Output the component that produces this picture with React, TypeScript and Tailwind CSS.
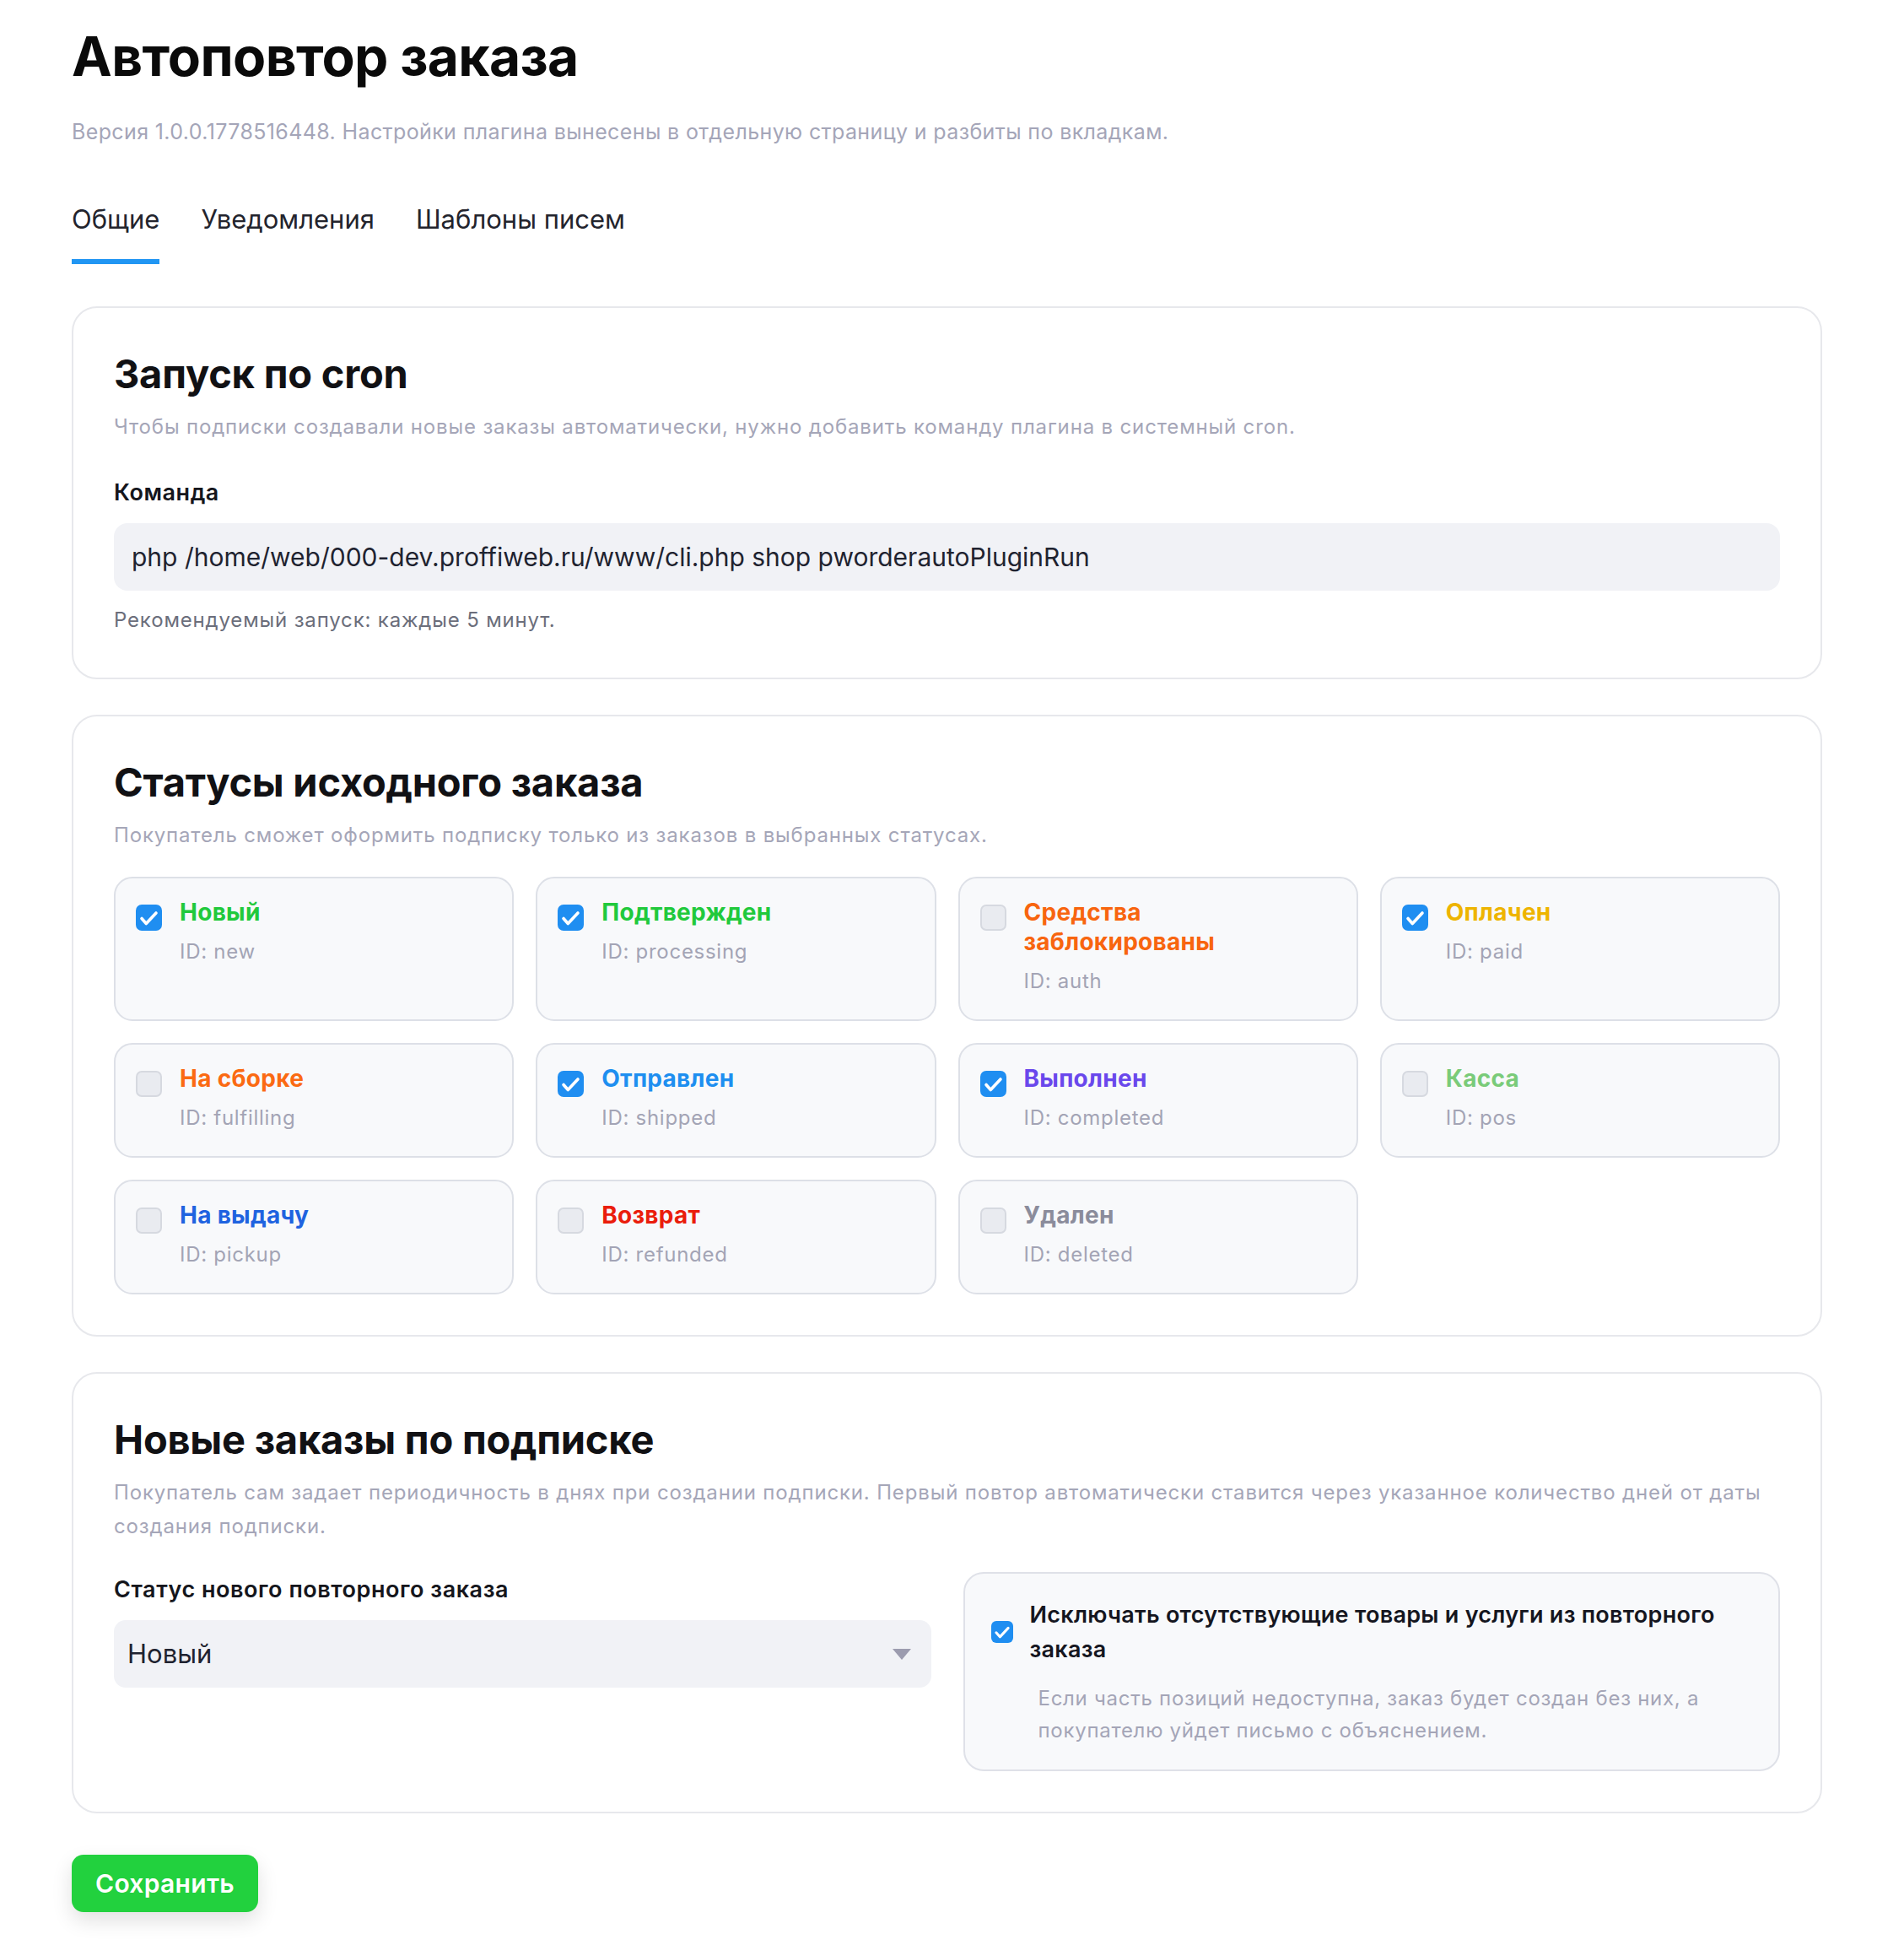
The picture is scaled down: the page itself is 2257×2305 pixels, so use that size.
import React from 'react';

type Status = {
  name: string;
  id: string;
  color: string;
  checked: boolean;
};

const statuses: Status[] = [
  { name: 'Новый', id: 'new', color: 'text-[#21c93c]', checked: true },
  { name: 'Подтвержден', id: 'processing', color: 'text-[#21c93c]', checked: true },
  { name: 'Средства заблокированы', id: 'auth', color: 'text-[#f8650f]', checked: false },
  { name: 'Оплачен', id: 'paid', color: 'text-[#eeb400]', checked: true },
  { name: 'На сборке', id: 'fulfilling', color: 'text-[#fb6a12]', checked: false },
  { name: 'Отправлен', id: 'shipped', color: 'text-[#1e8ff0]', checked: true },
  { name: 'Выполнен', id: 'completed', color: 'text-[#6a48ec]', checked: true },
  { name: 'Касса', id: 'pos', color: 'text-[#7acb79]', checked: false },
  { name: 'На выдачу', id: 'pickup', color: 'text-[#1f63e0]', checked: false },
  { name: 'Возврат', id: 'refunded', color: 'text-[#ea1d0c]', checked: false },
  { name: 'Удален', id: 'deleted', color: 'text-[#8b8c9b]', checked: false },
];

function CheckBox({ checked, small }: { checked: boolean; small?: boolean }) {
  const size = small ? 'w-[26px] h-[26px] rounded-[6px]' : 'w-[31px] h-[31px] rounded-[7px]';
  if (!checked) {
    return <span className={`${size} shrink-0 block bg-[#e9ebf0] border-2 border-[#d6d9e0]`} />;
  }
  return (
    <span className={`${size} shrink-0 flex items-center justify-center bg-[#1f8ef1]`}>
      <svg viewBox="0 0 31 31" className="w-full h-full">
        <path
          d="M7 16.5l5.3 6L24 10"
          fill="none"
          stroke="#ffffff"
          strokeWidth="3.6"
          strokeLinecap="round"
          strokeLinejoin="round"
        />
      </svg>
    </span>
  );
}

function Card({ title, desc, children }: { title: string; desc: string; children: React.ReactNode }) {
  return (
    <section className="rounded-[30px] border-2 border-[#e7e8ec] bg-white px-[48px] pt-[53px] pb-[48px]">
      <h2 className="text-[47px] leading-[50px] font-bold text-[#111114] tracking-[-0.005em]">{title}</h2>
      <p className="mt-[18px] text-[24px] leading-[40px] tracking-[0.035em] text-[#a5a6b8]">{desc}</p>
      {children}
    </section>
  );
}

export default function App() {
  const tabs = ['Общие', 'Уведомления', 'Шаблоны писем'];

  return (
    <div className="min-h-screen bg-white font-['Inter','Noto_Sans',sans-serif] text-[#1f2330]">
      <div className="ml-[85px] w-[2075px] pt-[28px] pb-[40px]">
        {/* Header */}
        <h1 className="text-[64px] leading-[77px] font-bold text-[#0a0a0a] tracking-[-0.01em]">
          Автоповтор заказа
        </h1>
        <p className="mt-[33px] text-[25px] leading-[36px] tracking-[0.015em] text-[#a4a5b8]">
          Версия 1.0.0.1778516448. Настройки плагина вынесены в отдельную страницу и разбиты по вкладкам.
        </p>

        {/* Tabs */}
        <nav className="mt-[66px] flex gap-[49px]">
          {tabs.map((tab, i) => (
            <div
              key={tab}
              className={`pb-[27px] border-b-[6px] text-[31px] leading-[40px] text-[#23242d] ${
                i === 0 ? 'border-[#2196f3]' : 'border-transparent'
              }`}
            >
              {tab}
            </div>
          ))}
        </nav>

        <div className="mt-[50px] flex flex-col gap-[42px]">
          {/* Cron */}
          <Card
            title="Запуск по cron"
            desc="Чтобы подписки создавали новые заказы автоматически, нужно добавить команду плагина в системный cron."
          >
            <div className="mt-[40px] text-[27px] leading-[36px] tracking-[0.02em] font-semibold text-[#15161c]">
              Команда
            </div>
            <div className="mt-[18px] h-[80px] rounded-[16px] bg-[#f1f2f6] px-[21px] flex items-center text-[30px] text-[#1f2330]">
              php /home/web/000-dev.proffiweb.ru/www/cli.php shop pworderautoPluginRun
            </div>
            <p className="mt-[15px] text-[24px] leading-[40px] tracking-[0.035em] text-[#6b6e7b]">
              Рекомендуемый запуск: каждые 5 минут.
            </p>
          </Card>

          {/* Statuses */}
          <Card
            title="Статусы исходного заказа"
            desc="Покупатель сможет оформить подписку только из заказов в выбранных статусах."
          >
            <div className="mt-[29px] grid grid-cols-4 gap-[26px]">
              {statuses.map((s) => (
                <div
                  key={s.id}
                  className="flex gap-[21px] rounded-[22px] border-2 border-[#dde0e7] bg-[#f8f9fb] pl-[24px] pr-[56px] pt-[23px] pb-[29px]"
                >
                  <div className="mt-[8px]">
                    <CheckBox checked={s.checked} />
                  </div>
                  <div>
                    <div className={`text-[28px] leading-[35px] tracking-[0.01em] font-bold ${s.color}`}>{s.name}</div>
                    <div className="mt-[13px] text-[24px] leading-[32px] tracking-[0.03em] text-[#a3a4b5]">
                      ID: {s.id}
                    </div>
                  </div>
                </div>
              ))}
            </div>
          </Card>

          {/* New orders */}
          <Card
            title="Новые заказы по подписке"
            desc="Покупатель сам задает периодичность в днях при создании подписки. Первый повтор автоматически ставится через указанное количество дней от даты создания подписки."
          >
            <div className="mt-[34px] grid grid-cols-2 gap-[38px] items-start">
              <div className="pt-[3px]">
                <div className="text-[27px] leading-[36px] tracking-[0.02em] font-semibold text-[#15161c]">
                  Статус нового повторного заказа
                </div>
                <div className="mt-[18px] h-[80px] rounded-[14px] bg-[#f1f2f6] pl-[16px] pr-[24px] flex items-center justify-between text-[31px] text-[#1f2330]">
                  <span>Новый</span>
                  <svg width="22" height="13" viewBox="0 0 22 13">
                    <path d="M0 0h22L11 13z" fill="#9c9caf" />
                  </svg>
                </div>
              </div>

              <div className="rounded-[24px] border-2 border-[#dfe1e8] bg-[#f8f9fb] pl-[31px] pr-[33px] pt-[28px] pb-[27px]">
                <div className="flex items-center gap-[20px]">
                  <CheckBox checked small />
                  <div className="text-[27px] leading-[41px] tracking-[0.01em] font-semibold text-[#15161f]">
                    Исключать отсутствующие товары и услуги из повторного заказа
                  </div>
                </div>
                <p className="mt-[19px] pl-[56px] text-[24px] leading-[38px] tracking-[0.03em] text-[#a4a5b7]">
                  Если часть позиций недоступна, заказ будет создан без них, а покупателю уйдет письмо с объяснением.
                </p>
              </div>
            </div>
          </Card>
        </div>

        {/* Save */}
        <button className="mt-[49px] h-[68px] px-[28px] rounded-[14px] bg-[#22d13e] text-white text-[30px] tracking-[0.01em] font-semibold shadow-[0_10px_24px_rgba(0,0,0,0.12)]">
          Сохранить
        </button>
      </div>
    </div>
  );
}
